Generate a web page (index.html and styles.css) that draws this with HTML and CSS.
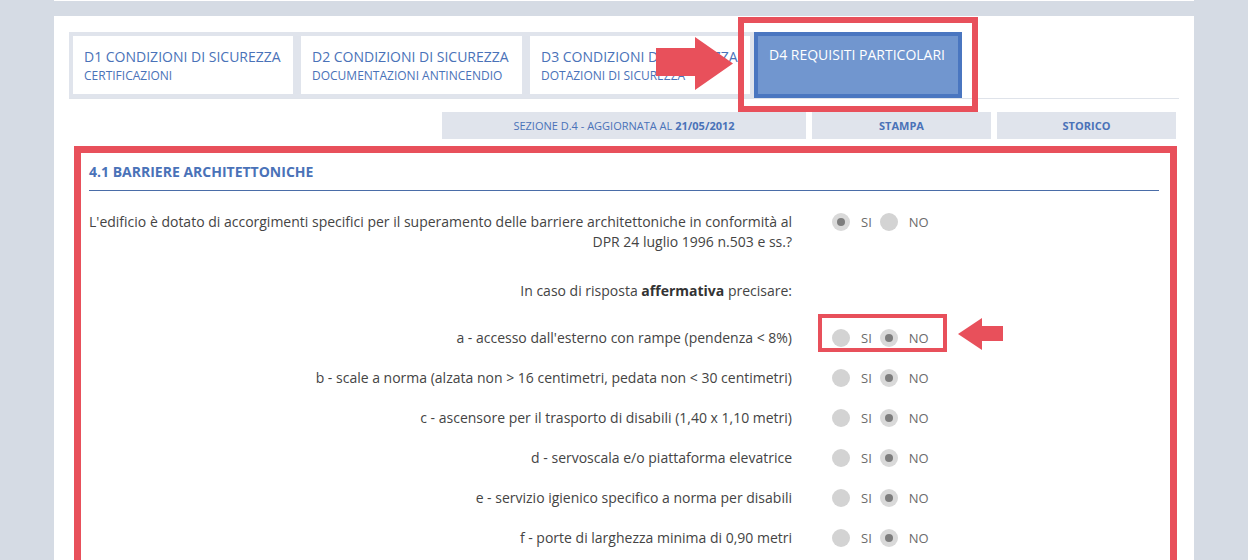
FILE: index.html
```html
<!DOCTYPE html>
<html lang="it">
<head>
<meta charset="utf-8">
<title>D4 Requisiti particolari</title>
<link rel="stylesheet" href="styles.css">
</head>
<body>
<div class="top-strip"></div>
<div class="panel">
  <div class="tabs-row">
    <div class="tabs">
      <a class="tab"><span class="tab-title">D1 CONDIZIONI DI SICUREZZA</span><span class="tab-sub">CERTIFICAZIONI</span></a>
      <a class="tab tab-wide"><span class="tab-title">D2 CONDIZIONI DI SICUREZZA</span><span class="tab-sub">DOCUMENTAZIONI ANTINCENDIO</span></a>
      <a class="tab"><span class="tab-title">D3 CONDIZIONI DI SICUREZZA</span><span class="tab-sub">DOTAZIONI DI SICUREZZA</span></a>
    </div>
    <a class="tab-active"><span class="tab-title">D4 REQUISITI PARTICOLARI</span></a>
  </div>

  <div class="actions">
    <div class="btn btn-info">SEZIONE D.4 - AGGIORNATA AL <b>21/05/2012</b></div>
    <div class="btn btn-small">STAMPA</div>
    <div class="btn btn-small">STORICO</div>
  </div>

  <section class="section">
    <h2 class="section-title">4.1 BARRIERE ARCHITETTONICHE</h2>

    <div class="row row-main">
      <div class="label">L'edificio è dotato di accorgimenti specifici per il superamento delle barriere architettoniche in conformità al<br>DPR 24 luglio 1996 n.503 e ss.?</div>
      <div class="radios">
        <span class="radio checked"></span><span class="opt">SI</span>
        <span class="radio"></span><span class="opt">NO</span>
      </div>
    </div>

    <div class="row row-intro">
      <div class="label">In caso di risposta <b>affermativa</b> precisare:</div>
    </div>

    <div class="row">
      <div class="label">a - accesso dall'esterno con rampe (pendenza &lt; 8%)</div>
      <div class="radios">
        <span class="radio"></span><span class="opt">SI</span>
        <span class="radio checked"></span><span class="opt">NO</span>
        <span class="mark-box"></span>
        <svg class="mark-arrow-left" width="45" height="32" viewBox="0 0 45 32"><polygon points="0,16 24,0 24,8 45,8 45,23 24,23 24,32" fill="#e8505b"/></svg>
      </div>
    </div>

    <div class="row">
      <div class="label">b - scale a norma (alzata non &gt; 16 centimetri, pedata non &lt; 30 centimetri)</div>
      <div class="radios">
        <span class="radio"></span><span class="opt">SI</span>
        <span class="radio checked"></span><span class="opt">NO</span>
      </div>
    </div>

    <div class="row">
      <div class="label">c - ascensore per il trasporto di disabili (1,40 x 1,10 metri)</div>
      <div class="radios">
        <span class="radio"></span><span class="opt">SI</span>
        <span class="radio checked"></span><span class="opt">NO</span>
      </div>
    </div>

    <div class="row">
      <div class="label">d - servoscala e/o piattaforma elevatrice</div>
      <div class="radios">
        <span class="radio"></span><span class="opt">SI</span>
        <span class="radio checked"></span><span class="opt">NO</span>
      </div>
    </div>

    <div class="row">
      <div class="label">e - servizio igienico specifico a norma per disabili</div>
      <div class="radios">
        <span class="radio"></span><span class="opt">SI</span>
        <span class="radio checked"></span><span class="opt">NO</span>
      </div>
    </div>

    <div class="row">
      <div class="label">f - porte di larghezza minima di 0,90 metri</div>
      <div class="radios">
        <span class="radio"></span><span class="opt">SI</span>
        <span class="radio checked"></span><span class="opt">NO</span>
      </div>
    </div>
  </section>

  <span class="mark-tab"></span>
  <svg class="mark-arrow-right" width="78" height="54" viewBox="0 0 78 54"><polygon points="0,11 39,11 39,0 77,26.5 39,53 39,39 0,39" fill="#e8505b"/></svg>
</div>
</body>
</html>
```

FILE: styles.css
```css
* { box-sizing: border-box; }

body {
  margin: 0;
  background: #d5dbe4;
  font-family: "Open Sans", "Liberation Sans", sans-serif;
  color: #444;
}

.top-strip {
  height: 1px;
  margin: 0 54px;
  background: #fff;
}

.panel {
  position: relative;
  margin: 15px 54px 0;
  padding: 16px 15px 0;
  background: #fff;
  min-height: 700px;
}

/* Tabs */
.tabs-row {
  display: flex;
  align-items: stretch;
  border-bottom: 1px solid #dfe3ea;
  height: 67px;
}

.tabs {
  display: flex;
  gap: 8px;
  padding: 4px;
  background: #e0e4ec;
  height: 66px;
}

.tab {
  display: flex;
  flex-direction: column;
  width: 220px;
  padding: 11px 11px 0;
  background: #fff;
  color: #4a72b8;
  text-decoration: none;
}

.tab-wide { width: 221px; }

.tab-title {
  font-size: 14px;
  line-height: 19px;
  white-space: nowrap;
}

.tab-sub {
  font-size: 12px;
  line-height: 20px;
  white-space: nowrap;
}

.tab-active {
  display: block;
  width: 208px;
  height: 66px;
  padding: 7px 11px 0;
  background: #7196cf;
  border: 4px solid #4a76c0;
  color: #fff;
}

/* Action buttons */
.actions {
  display: flex;
  justify-content: flex-end;
  gap: 6px;
  margin: 13px 3px 0 0;
}

.btn {
  height: 27px;
  line-height: 27px;
  background: #e0e4ec;
  color: #4a72b8;
  font-size: 11px;
  text-align: center;
}

.btn-info { width: 364px; }
.btn-info b { font-weight: 700; }

.btn-small {
  width: 179px;
  font-weight: 700;
}

/* Section */
.section {
  margin: 7px 2px 0 5px;
  border: 7px solid #e8505b;
  padding: 0 11px 40px 8px;
}

.section-title {
  margin: 0;
  padding: 10px 0 9px;
  font-size: 14px;
  line-height: 18px;
  font-weight: 700;
  color: #4a72b8;
  border-bottom: 1px solid #4a6da8;
}

.row {
  display: flex;
  align-items: flex-start;
  padding: 10px 0;
  font-size: 14px;
  line-height: 20px;
}

.row-main { margin-top: 11px; }

.row-intro { padding: 19px 0 17px; }

.label {
  width: 703px;
  flex: none;
  text-align: right;
  color: #444;
}

.label b { font-weight: 700; color: #333; }

.radios {
  position: relative;
  display: flex;
  align-items: center;
  height: 20px;
  margin-left: 40px;
  font-size: 13px;
}

.radio {
  width: 18px;
  height: 18px;
  border-radius: 50%;
  background: #d3d3d3;
  display: flex;
  align-items: center;
  justify-content: center;
}

.radio.checked { background: #d9d9d9; }

.radio.checked::after {
  content: "";
  width: 8px;
  height: 8px;
  border-radius: 50%;
  background: #7d7d7d;
}

.opt {
  color: #6b6b6b;
  margin: 0 8px 0 11px;
}

/* Annotations */
.mark-box {
  position: absolute;
  left: -14px;
  top: -14px;
  width: 129px;
  height: 38px;
  border: 4px solid #e8505b;
}

.mark-arrow-left {
  position: absolute;
  left: 126px;
  top: -10px;
}

.mark-tab {
  position: absolute;
  left: 684px;
  top: 1px;
  width: 240px;
  height: 95px;
  border: 6px solid #e8505b;
}

.mark-arrow-right {
  position: absolute;
  left: 602px;
  top: 21px;
}
```
